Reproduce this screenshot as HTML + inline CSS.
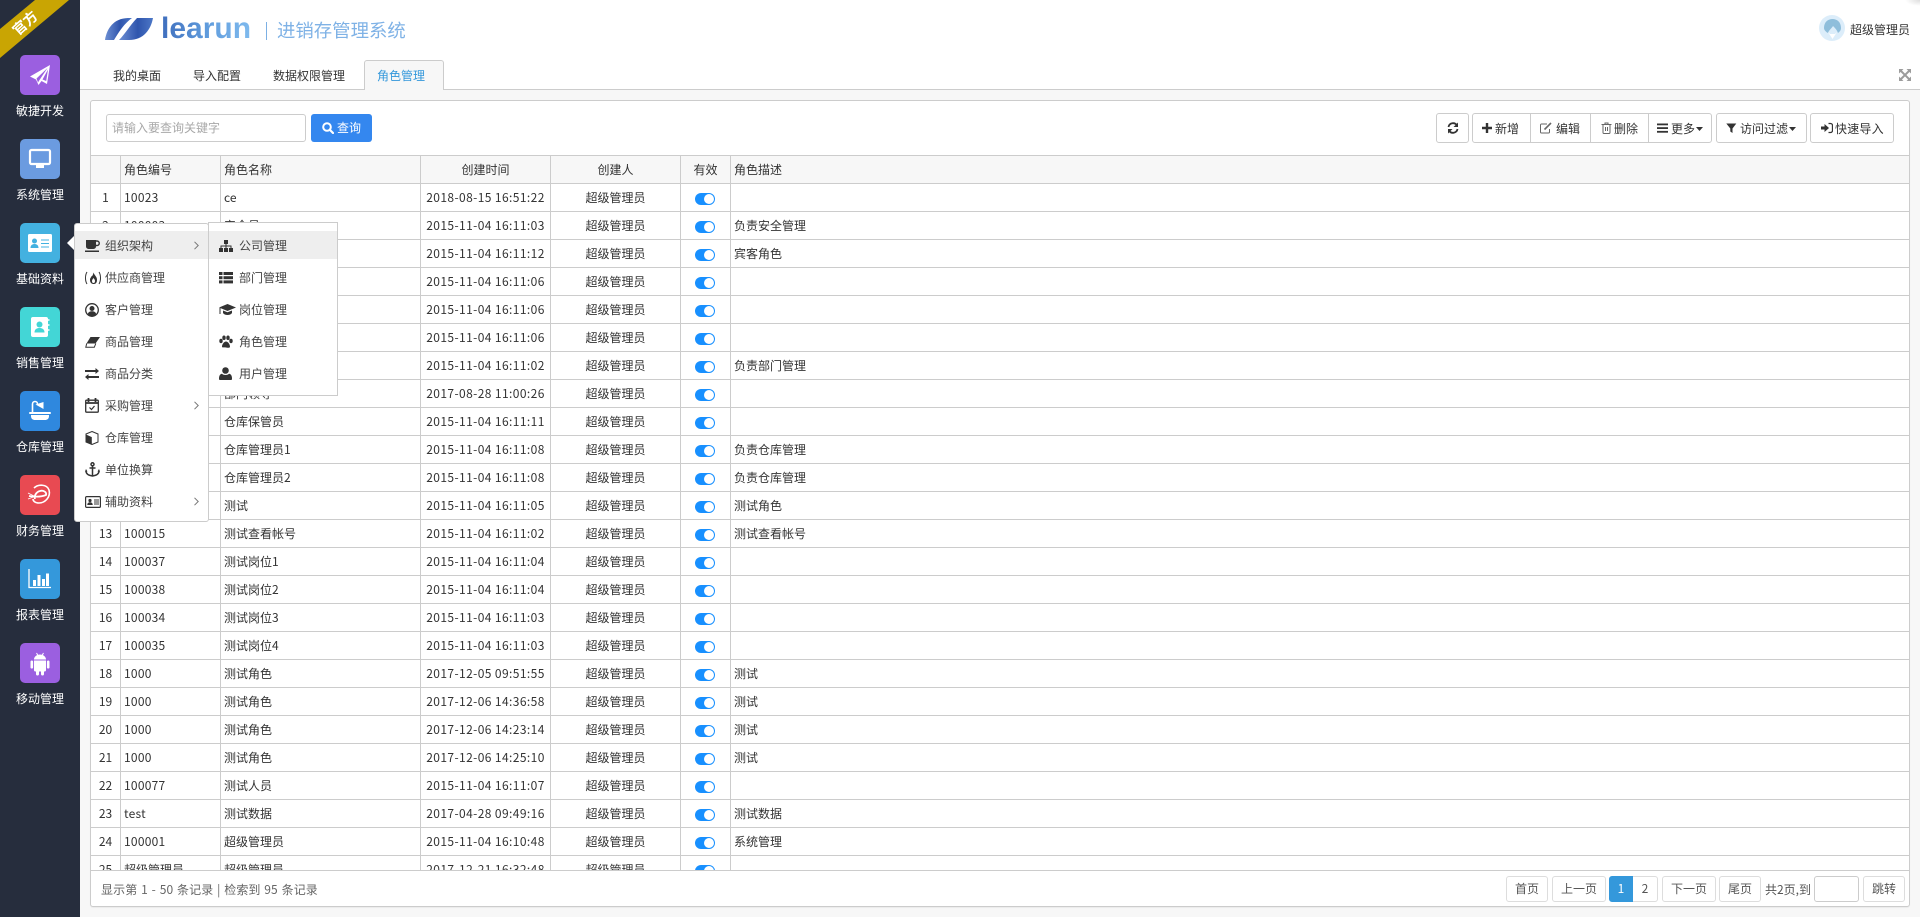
<!DOCTYPE html>
<html lang="zh">
<head>
<meta charset="utf-8">
<title>角色管理</title>
<style>
*{box-sizing:border-box}
html,body{margin:0;padding:0;width:1920px;height:917px;overflow:hidden}
body{background:#f7f7f7;font:12px/16px "Noto Sans CJK SC","Liberation Sans",sans-serif;color:#333;position:relative}
.a{position:absolute;white-space:nowrap}
#side{position:absolute;left:0;top:0;width:80px;height:917px;background:#262d3d}
.sico{position:absolute;left:20px;width:40px;height:40px;border-radius:5px}
.sico svg{display:block;width:40px;height:40px}
.slab{position:absolute;left:0;width:80px;text-align:center;color:#fff;line-height:16px}
#top{position:absolute;left:80px;top:0;width:1840px;height:90px;background:#fff;border-bottom:1px solid #ccc}
.tab{position:absolute;top:67px;line-height:17px;color:#333}
#atab{position:absolute;left:364px;top:60px;width:80px;height:30px;background:#f7f7f7;border:1px solid #ccc;border-bottom:none;border-radius:3px 3px 0 0;color:#3498db;text-align:center;line-height:29px;padding-right:6px}
#panel{position:absolute;left:90px;top:100px;width:1820px;height:807px;background:#fff;border:1px solid #ccc;border-radius:3px;box-shadow:0 1px 1px rgba(0,0,0,.05)}
#wrap{position:absolute;left:91px;top:155px;width:1818px;height:716px;overflow:hidden;border-bottom:1px solid #ccc;border-top:1px solid #ccc}
table{border-collapse:separate;border-spacing:0;table-layout:fixed;width:1818px}
th,td{height:28px;padding:0 4px 0 3px;border-right:1px solid #ccc;border-bottom:1px solid #ccc;font-weight:normal;white-space:nowrap;overflow:hidden;line-height:27px;color:#333;text-align:left}
th{background:#f7f7f7}
th:last-child,td:last-child{border-right:none}
.c{text-align:center;padding:0}
td.n{letter-spacing:.25px}
td.c.n{letter-spacing:.4px}
.sw{display:block;width:20px;height:12px;border-radius:6px;background:#1890ff;margin:3px auto 0;position:relative}
.sw:after{content:"";position:absolute;right:1px;top:1px;width:10px;height:10px;border-radius:5px;background:#fff}
.btn{position:absolute;background:#fff;border:1px solid #ccc;border-radius:3px;color:#333;height:30px;top:113px;line-height:28px;text-align:center}
.btn svg,.mi svg{position:absolute}
.mi svg{margin-top:1px}
.pg{position:absolute;top:876px;height:26px;background:#fff;border:1px solid #ddd;border-radius:3px;text-align:center;line-height:24px;color:#555}
#m1{position:absolute;left:74px;top:223px;width:135px;height:299px;background:#fff;border:1px solid #ccc;border-radius:3px}
#m2{position:absolute;left:208px;top:222px;width:130px;height:174px;background:#fff;border:1px solid #ccc}
.mi{position:absolute;left:0;width:100%;height:28px;line-height:30px;color:#444}
.mi.on{background:#eee}
</style>
</head>
<body>

<div id="top">
  <svg class="a" style="left:25px;top:16px" width="50" height="26" viewBox="0 0 50 26">
    <defs><linearGradient id="lg" x1="0" x2="1" y1="0" y2="0"><stop offset="0" stop-color="#6d8fd3"/><stop offset=".55" stop-color="#2f55ad"/><stop offset="1" stop-color="#4c77c6"/></linearGradient></defs>
    <path fill="url(#lg)" d="M0 24C2 12 9 2 24 2h3C20 7 15 14 9 24z"/>
    <path fill="url(#lg)" d="M14 24C20 18 26 8 32 2h16c-2 11-9 22-24 22z"/>
  </svg>
  <div class="a" style="left:81px;top:11px;font:bold 30px/36px 'Liberation Sans',sans-serif;background:linear-gradient(90deg,#3f6ebd,#5f9bdc 50%,#7fbaee);-webkit-background-clip:text;background-clip:text;color:transparent">learun</div>
  <div class="a" style="left:186px;top:22px;width:1px;height:18px;background:#7cb0e4"></div>
  <div class="a" style="left:197px;top:17px;font-size:18.4px;line-height:27px;color:#7fb2e6">进销存管理系统</div>
  <div class="tab" style="left:33px">我的桌面</div>
  <div class="tab" style="left:113px">导入配置</div>
  <div class="tab" style="left:193px">数据权限管理</div>
  <svg class="a" style="left:1739px;top:15px" width="26" height="26" viewBox="0 0 26 26">
    <circle cx="13" cy="13" r="13" fill="#dcedfa"/>
    <path fill="#8fbedb" d="M5 13C5 7 9 4 13.500 4S22 7 22 13c0 3-2 4-3 5-1-3-3-5-5-7-1 2-4 4-5 7-2-1-4-3-4-5z"/>
    <path fill="#fff" d="M9 17l4.500 7 4.500-7-2 2h-5z"/>
  </svg>
  <div class="a" style="left:1770px;top:22px">超级管理员</div>
  <svg class="a" style="left:1819px;top:69px" width="12" height="12" viewBox="0 0 12 12" fill="#9c9c9c" stroke="#9c9c9c">
    <path stroke="none" d="M0 0h4.500L0 4.500zM12 0v4.500L7.500 0zM0 12V7.500L4.500 12zM12 12H7.500L12 7.500z"/>
    <path stroke-width="2" fill="none" d="M2 2l8 8M10 2l-8 8"/>
  </svg>
</div>
<div id="atab">角色管理</div>
<div class="a" style="left:1905px;top:0;width:15px;height:6px;background:radial-gradient(ellipse at 100% 0,#ddd,#fff 70%)"></div>

<div id="panel"></div>

<div class="a" style="left:106px;top:114px;width:200px;height:28px;border:1px solid #ccc;border-radius:3px;background:#fff;color:#a8a8a8;line-height:26px;padding-left:5px">请输入要查询关键字</div>
<div class="a" style="left:311px;top:114px;width:61px;height:28px;background:#3487ef;border-radius:3px;color:#fff;line-height:27px;padding-left:26px">查询
  <svg class="a" style="left:11px;top:8px" width="12" height="12" viewBox="0 0 12 12"><circle cx="5" cy="5" r="3.800" fill="none" stroke="#fff" stroke-width="2"/><path d="M8 8l3 3" stroke="#fff" stroke-width="2.200" stroke-linecap="round"/></svg>
</div>

<div class="btn" style="left:1436px;width:33px">
  <svg style="left:10px;top:8px" width="12" height="12" viewBox="0 0 12 12" fill="none" stroke="#333" stroke-width="1.800"><path d="M1.500 5A4.600 4.600 0 0 1 10 3.500"/><path d="M10.500 7A4.600 4.600 0 0 1 2 8.500"/><path fill="#333" stroke="none" d="M11 .5V5H6.500zM1 11.500V7h4.500z"/></svg>
</div>
<div class="btn" style="left:1472px;width:240px"></div>
<div class="a" style="left:1530px;top:114px;width:1px;height:28px;background:#ccc"></div>
<div class="a" style="left:1590px;top:114px;width:1px;height:28px;background:#ccc"></div>
<div class="a" style="left:1648px;top:114px;width:1px;height:28px;background:#ccc"></div>
<svg class="a" style="left:1482px;top:122px" width="10" height="12" viewBox="0 0 10 12"><path fill="#333" d="M3.800 1h2.400v3.800H10v2.400H6.200V11H3.800V7.200H0V4.800h3.800z"/></svg>
<div class="a" style="left:1495px;top:121px">新增</div>
<svg class="a" style="left:1540px;top:122px" width="12" height="12" viewBox="0 0 12 12" fill="none" stroke="#666"><path d="M9.500 7v3a1 1 0 0 1-1 1H1.500a1 1 0 0 1-1-1V3a1 1 0 0 1 1-1H7"/><path stroke-width="1.600" d="M4.500 7.500L11 1"/></svg>
<div class="a" style="left:1556px;top:121px">编辑</div>
<svg class="a" style="left:1601px;top:122px" width="11" height="12" viewBox="0 0 11 12" fill="none" stroke="#666"><path d="M.5 2.500h10M2 2.500v8.000a1 1 0 0 0 1 1h5a1 1 0 0 0 1-1v-8M4 2.500V1h3v1.500M4.500 5v4M6.500 5v4"/></svg>
<div class="a" style="left:1614px;top:121px">删除</div>
<svg class="a" style="left:1657px;top:122px" width="11" height="12" viewBox="0 0 11 12" fill="#333"><rect y="1.500" width="11" height="1.800"/><rect y="5.200" width="11" height="1.800"/><rect y="8.900" width="11" height="1.800"/></svg>
<div class="a" style="left:1671px;top:121px">更多</div>
<svg class="a" style="left:1696px;top:127px" width="7" height="4"><path fill="#333" d="M0 0h7L3.500 4z"/></svg>

<div class="btn" style="left:1716px;width:91px"></div>
<svg class="a" style="left:1726px;top:122px" width="11" height="12" viewBox="0 0 11 12"><path fill="#333" d="M.3 1.500h10L6.500 6.500v4.500L4.300 9.500v-3z"/></svg>
<div class="a" style="left:1740px;top:121px">访问过滤</div>
<svg class="a" style="left:1789px;top:127px" width="7" height="4"><path fill="#333" d="M0 0h7L3.500 4z"/></svg>

<div class="btn" style="left:1810px;width:84px"></div>
<svg class="a" style="left:1821px;top:122px" width="12" height="12" viewBox="0 0 12 12"><path fill="#333" d="M0 4.500h3.500V2L8 6 3.500 10V7.500H0z"/><path fill="none" stroke="#333" stroke-width="1.300" d="M7.500 1.500h2a2 2 0 0 1 2 2v5a2 2 0 0 1-2 2h-2"/></svg>
<div class="a" style="left:1835px;top:121px;letter-spacing:.2px">快速导入</div>

<div id="wrap">
<table>
<colgroup><col style="width:30px"><col style="width:100px"><col style="width:200px"><col style="width:130px"><col style="width:130px"><col style="width:50px"><col></colgroup>
<tr><th class="c"></th><th>角色编号</th><th>角色名称</th><th class="c">创建时间</th><th class="c">创建人</th><th class="c">有效</th><th>角色描述</th></tr>
<tr><td class="c">1</td><td class="n">10023</td><td>ce</td><td class="c n">2018-08-15 16:51:22</td><td class="c">超级管理员</td><td><i class="sw"></i></td><td></td></tr>
<tr><td class="c">2</td><td class="n">100003</td><td>安全员</td><td class="c n">2015-11-04 16:11:03</td><td class="c">超级管理员</td><td><i class="sw"></i></td><td>负责安全管理</td></tr>
<tr><td class="c">3</td><td class="n">100004</td><td>宾客</td><td class="c n">2015-11-04 16:11:12</td><td class="c">超级管理员</td><td><i class="sw"></i></td><td>宾客角色</td></tr>
<tr><td class="c">4</td><td class="n">100005</td><td>财务</td><td class="c n">2015-11-04 16:11:06</td><td class="c">超级管理员</td><td><i class="sw"></i></td><td></td></tr>
<tr><td class="c">5</td><td class="n">100006</td><td>采购</td><td class="c n">2015-11-04 16:11:06</td><td class="c">超级管理员</td><td><i class="sw"></i></td><td></td></tr>
<tr><td class="c">6</td><td class="n">100007</td><td>销售</td><td class="c n">2015-11-04 16:11:06</td><td class="c">超级管理员</td><td><i class="sw"></i></td><td></td></tr>
<tr><td class="c">7</td><td class="n">100008</td><td>部门经理</td><td class="c n">2015-11-04 16:11:02</td><td class="c">超级管理员</td><td><i class="sw"></i></td><td>负责部门管理</td></tr>
<tr><td class="c">8</td><td class="n">100009</td><td>部门领导</td><td class="c n">2017-08-28 11:00:26</td><td class="c">超级管理员</td><td><i class="sw"></i></td><td></td></tr>
<tr><td class="c">9</td><td class="n">100010</td><td>仓库保管员</td><td class="c n">2015-11-04 16:11:11</td><td class="c">超级管理员</td><td><i class="sw"></i></td><td></td></tr>
<tr><td class="c">10</td><td class="n">100011</td><td>仓库管理员1</td><td class="c n">2015-11-04 16:11:08</td><td class="c">超级管理员</td><td><i class="sw"></i></td><td>负责仓库管理</td></tr>
<tr><td class="c">11</td><td class="n">100012</td><td>仓库管理员2</td><td class="c n">2015-11-04 16:11:08</td><td class="c">超级管理员</td><td><i class="sw"></i></td><td>负责仓库管理</td></tr>
<tr><td class="c">12</td><td class="n">100014</td><td>测试</td><td class="c n">2015-11-04 16:11:05</td><td class="c">超级管理员</td><td><i class="sw"></i></td><td>测试角色</td></tr>
<tr><td class="c">13</td><td class="n">100015</td><td>测试查看帐号</td><td class="c n">2015-11-04 16:11:02</td><td class="c">超级管理员</td><td><i class="sw"></i></td><td>测试查看帐号</td></tr>
<tr><td class="c">14</td><td class="n">100037</td><td>测试岗位1</td><td class="c n">2015-11-04 16:11:04</td><td class="c">超级管理员</td><td><i class="sw"></i></td><td></td></tr>
<tr><td class="c">15</td><td class="n">100038</td><td>测试岗位2</td><td class="c n">2015-11-04 16:11:04</td><td class="c">超级管理员</td><td><i class="sw"></i></td><td></td></tr>
<tr><td class="c">16</td><td class="n">100034</td><td>测试岗位3</td><td class="c n">2015-11-04 16:11:03</td><td class="c">超级管理员</td><td><i class="sw"></i></td><td></td></tr>
<tr><td class="c">17</td><td class="n">100035</td><td>测试岗位4</td><td class="c n">2015-11-04 16:11:03</td><td class="c">超级管理员</td><td><i class="sw"></i></td><td></td></tr>
<tr><td class="c">18</td><td class="n">1000</td><td>测试角色</td><td class="c n">2017-12-05 09:51:55</td><td class="c">超级管理员</td><td><i class="sw"></i></td><td>测试</td></tr>
<tr><td class="c">19</td><td class="n">1000</td><td>测试角色</td><td class="c n">2017-12-06 14:36:58</td><td class="c">超级管理员</td><td><i class="sw"></i></td><td>测试</td></tr>
<tr><td class="c">20</td><td class="n">1000</td><td>测试角色</td><td class="c n">2017-12-06 14:23:14</td><td class="c">超级管理员</td><td><i class="sw"></i></td><td>测试</td></tr>
<tr><td class="c">21</td><td class="n">1000</td><td>测试角色</td><td class="c n">2017-12-06 14:25:10</td><td class="c">超级管理员</td><td><i class="sw"></i></td><td>测试</td></tr>
<tr><td class="c">22</td><td class="n">100077</td><td>测试人员</td><td class="c n">2015-11-04 16:11:07</td><td class="c">超级管理员</td><td><i class="sw"></i></td><td></td></tr>
<tr><td class="c">23</td><td class="n">test</td><td>测试数据</td><td class="c n">2017-04-28 09:49:16</td><td class="c">超级管理员</td><td><i class="sw"></i></td><td>测试数据</td></tr>
<tr><td class="c">24</td><td class="n">100001</td><td>超级管理员</td><td class="c n">2015-11-04 16:10:48</td><td class="c">超级管理员</td><td><i class="sw"></i></td><td>系统管理</td></tr>
<tr><td class="c">25</td><td>超级管理员</td><td>超级管理员</td><td class="c n">2017-12-21 16:32:48</td><td class="c">超级管理员</td><td><i class="sw"></i></td><td></td></tr>
</table>
</div>

<div class="a" style="left:101px;top:882px;color:#666;word-spacing:1px;letter-spacing:.1px">显示第 1 - 50 条记录 | 检索到 95 条记录</div>
<div class="pg" style="left:1506px;width:42px">首页</div>
<div class="pg" style="left:1552px;width:54px">上一页</div>
<div class="pg" style="left:1609px;width:24px;background:#3498db;border-color:#3498db;color:#fff;border-radius:3px 0 0 3px">1</div>
<div class="pg" style="left:1633px;width:25px;border-radius:0 3px 3px 0;border-left:none">2</div>
<div class="pg" style="left:1662px;width:54px">下一页</div>
<div class="pg" style="left:1719px;width:42px">尾页</div>
<div class="a" style="left:1765px;top:882px;color:#555">共2页,到</div>
<div class="pg" style="left:1814px;width:45px;border-color:#ccc"></div>
<div class="pg" style="left:1863px;width:42px">跳转</div>

<div id="side">
  <svg class="a" style="left:0;top:0" width="80" height="60"><polygon points="0,29 35,0 69,0 0,58" fill="#c9a503"/></svg>
  <div class="a" style="left:10px;top:14px;width:30px;text-align:center;color:#fff;font-size:14px;line-height:18px;font-weight:bold;transform:rotate(-42deg)">官方</div>

  <div class="sico" style="top:55px;background:#9b5fe0"><svg viewBox="0 0 40 40"><path fill="#fff" d="M30 10L10 21.500l6 3 2.500 5.500 3-4 5.500 3z"/><path fill="#9b5fe0" d="M16.500 23.500l11-10.500-8 12-1.500 2.500zM22.500 24.500L28 14.500l-1.800 11.500z"/></svg></div>
  <div class="slab" style="top:103px">敏捷开发</div>

  <div class="sico" style="top:139px;background:#6b9be0"><svg viewBox="0 0 40 40"><rect x="10" y="11" width="20" height="14" rx="1.500" fill="none" stroke="#fff" stroke-width="2.200"/><rect x="16" y="26" width="8" height="3" fill="#fff"/></svg></div>
  <div class="slab" style="top:187px">系统管理</div>

  <div class="sico" style="top:223px;background:#43b1e0"><svg viewBox="0 0 40 40"><rect x="8" y="11" width="24" height="18" rx="1.500" fill="#fff"/><circle cx="14.500" cy="18" r="2.500" fill="#43b1e0"/><path fill="#43b1e0" d="M10.500 25c0-3 2-4 4-4s4 1 4 4z"/><path stroke="#43b1e0" d="M21 17h8M21 20.500h8M21 24h8" fill="none"/></svg></div>
  <div class="slab" style="top:271px">基础资料</div>

  <div class="sico" style="top:307px;background:#43d6d6"><svg viewBox="0 0 40 40"><rect x="11" y="10" width="17" height="20" rx="2" fill="#fff"/><path stroke="#fff" stroke-width="1.500" d="M28 13h1.500M28 18h1.500M28 23h1.500"/><circle cx="19.500" cy="17.500" r="3" fill="#43d6d6"/><path fill="#43d6d6" d="M14.500 25.500c0-3.500 2.500-4.500 5-4.500s5 1 5 4.500z"/></svg></div>
  <div class="slab" style="top:355px">销售管理</div>

  <div class="sico" style="top:391px;background:#2f88de"><svg viewBox="0 0 40 40"><path fill="none" stroke="#fff" stroke-width="1.600" d="M12.500 21v-8a2.500 2.500 0 0 1 5 0"/><path fill="#fff" d="M15.500 13.500l8-2.500v7z"/><rect x="9" y="21" width="22" height="2" rx="1" fill="#fff"/><path fill="#fff" d="M11 24h18v1c0 3-2 4-4 4H15c-2 0-4-1-4-4z"/></svg></div>
  <div class="slab" style="top:439px">仓库管理</div>

  <div class="sico" style="top:475px;background:#e84a52"><svg viewBox="0 0 40 40" fill="none" stroke="#fff"><path stroke-width="1.600" d="M14 13c4-4 13-4 15 2 2 7-4 13-10 13-4 0-6-2-6-4"/><path stroke-width="1.800" d="M9 21c6 1 12 1 17-1 1-3-3-5-6-4-4 1-6 5-5 8"/><path stroke-width=".8" d="M8 18l8 4M8 24l8-3"/></svg></div>
  <div class="slab" style="top:523px">财务管理</div>

  <div class="sico" style="top:559px;background:#3498db"><svg viewBox="0 0 40 40"><path fill="none" stroke="#fff" stroke-width="1.300" d="M9 10v18.500h22"/><path fill="#fff" d="M13 21h3v6h-3zM17.500 16h3v11h-3zM22 20h3v7h-3zM26 14.500h3V27h-3z"/></svg></div>
  <div class="slab" style="top:607px">报表管理</div>

  <div class="sico" style="top:643px;background:#9b5fe0"><svg viewBox="0 0 40 40"><path fill="#fff" d="M14 16.500c0-3 3-5 6-5s6 2 6 5zM14 17.500h12V27a1.500 1.500 0 0 1-1.500 1.500H24V31a1.500 1.500 0 0 1-3 0v-2.500h-2V31a1.500 1.500 0 0 1-3 0v-2.500h-.5A1.500 1.500 0 0 1 14 27z"/><rect x="10.500" y="17.500" width="2.600" height="8" rx="1.300" fill="#fff"/><rect x="26.900" y="17.500" width="2.600" height="8" rx="1.300" fill="#fff"/><path stroke="#fff" d="M16.500 10l1.500 2.500M23.500 10L22 12.500"/></svg></div>
  <div class="slab" style="top:691px">移动管理</div>
</div>

<svg class="a" style="left:67px;top:235px" width="8" height="16"><path fill="#fff" d="M8 0v16L0 8z"/></svg>

<div id="m1">
  <div class="mi on" style="top:7px"><svg style="left:10px;top:7px" width="15" height="14" viewBox="0 0 15 14"><path fill="#333" d="M1 1h10v6.500A2.500 2.500 0 0 1 8.500 10h-5A2.500 2.500 0 0 1 1 7.500z"/><path fill="none" stroke="#333" stroke-width="1.400" d="M11 2h1a2 2 0 0 1 0 4.500h-1"/><rect y="11.500" width="14" height="1.500" fill="#333"/></svg><span class="a" style="left:30px;top:0">组织架构</span><svg style="left:119px;top:9px" width="5" height="9" viewBox="0 0 5 9"><path fill="none" stroke="#777" d="M.5.800L4.200 4.500.5 8.200"/></svg></div>
  <div class="mi" style="top:39px"><svg style="left:9px;top:6px" width="18" height="16" viewBox="0 0 18 16" fill="none" stroke="#333"><path d="M3 2C1 5 1 11 3 14M15 2c2 3 2 9 0 12"/><path fill="#333" stroke="none" d="M9.500 2.500c1 3 3.500 4 3.500 7.500S11 14 9.500 14 6 13 6 10c0-2.500 1.500-2.500 1.500-4 1 .5 1.500-1.500 2-3.500z"/><path fill="#fff" stroke="none" d="M9.500 8c.5 1 1.500 1.500 1.500 3s-.7 2-1.500 2-1.500-.5-1.500-2 1-2 1.500-3z"/></svg><span class="a" style="left:30px;top:0">供应商管理</span></div>
  <div class="mi" style="top:71px"><svg style="left:10px;top:7px" width="14" height="14" viewBox="0 0 14 14"><circle cx="7" cy="7" r="6.300" fill="none" stroke="#333" stroke-width="1.300"/><circle cx="7" cy="5.500" r="2.500" fill="#333"/><path fill="#333" d="M2.800 11c.5-2 2.200-2.800 4.200-2.800s3.700.8 4.200 2.800c-1 1.200-2.500 2-4.200 2s-3.200-.8-4.200-2z"/></svg><span class="a" style="left:30px;top:0">客户管理</span></div>
  <div class="mi" style="top:103px"><svg style="left:10px;top:8px" width="15" height="12" viewBox="0 0 15 12"><path fill="#333" d="M5.500 1h9.500L10.500 7.500h-9z"/><path fill="none" stroke="#333" d="M1.700 7.500L.8 11.300h8.500l1.500-3.800"/></svg><span class="a" style="left:30px;top:0">商品管理</span></div>
  <div class="mi" style="top:135px"><svg style="left:10px;top:8px" width="14" height="12" viewBox="0 0 14 12"><path fill="#333" d="M0 2h10.500V0L14 3l-3.500 3V4H0zM14 8H3.500V6L0 9l3.500 3v-2H14z"/></svg><span class="a" style="left:30px;top:0">商品分类</span></div>
  <div class="mi" style="top:167px"><svg style="left:10px;top:6px" width="14" height="15" viewBox="0 0 14 15" fill="none" stroke="#333"><rect x=".7" y="2.200" width="12.600" height="12" rx="1" stroke-width="1.300"/><path stroke-width="1.800" d="M3.500 0v4M10.500 0v4M.7 5h12.600"/><path stroke-width="1.200" d="M4.500 9.500L6.500 11.500l3-3.500"/></svg><span class="a" style="left:30px;top:0">采购管理</span><svg style="left:119px;top:9px" width="5" height="9" viewBox="0 0 5 9"><path fill="none" stroke="#777" d="M.5.800L4.200 4.500.5 8.200"/></svg></div>
  <div class="mi" style="top:199px"><svg style="left:10px;top:7px" width="14" height="14" viewBox="0 0 14 14"><path fill="#fff" stroke="#333" d="M7 .5l6 2.500v8L7 13.500 1 11V3z"/><path fill="#333" d="M1 3.500l5.800 2.600V13.500L1 11z"/></svg><span class="a" style="left:30px;top:0">仓库管理</span></div>
  <div class="mi" style="top:231px"><svg style="left:10px;top:6px" width="15" height="15" viewBox="0 0 15 15" fill="none" stroke="#333" stroke-width="1.500"><circle cx="7.500" cy="2.300" r="1.500"/><path d="M7.500 4v10M4.500 6h6"/><path d="M1 9c0 3 3 4.500 6.500 5 3.500-.5 6.500-2 6.500-5"/><path fill="#333" stroke="none" d="M0 9.500L1 7l1.500 2.500zM12.500 9.500L14 7l1 2.500z"/></svg><span class="a" style="left:30px;top:0">单位换算</span></div>
  <div class="mi" style="top:263px"><svg style="left:10px;top:8px" width="16" height="12" viewBox="0 0 16 12" fill="none" stroke="#333"><rect x=".6" y=".6" width="14.800" height="10.800" rx="1" stroke-width="1.200"/><circle cx="5" cy="4.500" r="1.600" fill="#333" stroke="none"/><path fill="#333" stroke="none" d="M2.300 9c0-2 1.300-2.700 2.700-2.700S7.700 7 7.700 9z"/><path d="M9 4h5M9 6h5M9 8h5"/></svg><span class="a" style="left:30px;top:0">辅助资料</span><svg style="left:119px;top:9px" width="5" height="9" viewBox="0 0 5 9"><path fill="none" stroke="#777" d="M.5.800L4.200 4.500.5 8.200"/></svg></div>
</div>

<div id="m2">
  <div class="mi on" style="top:8px"><svg style="left:10px;top:7px" width="14" height="14" viewBox="0 0 14 14" fill="#333"><rect x="5" y="1" width="4" height="4"/><rect y="9" width="4" height="4"/><rect x="5" y="9" width="4" height="4"/><rect x="10" y="9" width="4" height="4"/><path fill="none" stroke="#333" d="M7 5v4M2 9V7h10v2"/></svg><span class="a" style="left:30px;top:0">公司管理</span></div>
  <div class="mi" style="top:40px"><svg style="left:10px;top:8px" width="14" height="12" viewBox="0 0 14 12" fill="#333"><rect width="3.500" height="3"/><rect x="4.500" width="9.500" height="3"/><rect y="4.200" width="3.500" height="3"/><rect x="4.500" y="4.200" width="9.500" height="3"/><rect y="8.400" width="3.500" height="3"/><rect x="4.500" y="8.400" width="9.500" height="3"/></svg><span class="a" style="left:30px;top:0">部门管理</span></div>
  <div class="mi" style="top:72px"><svg style="left:10px;top:7px" width="17" height="14" viewBox="0 0 17 14" fill="#333"><path d="M8.500 1L17 4.500 8.500 8 0 4.500z"/><path d="M4 7.500l4.500 1.800L13 7.500V10c-1 1.500-3 2-4.500 2S5 11.500 4 10z"/><path stroke="#333" d="M1 5v6"/></svg><span class="a" style="left:30px;top:0">岗位管理</span></div>
  <div class="mi" style="top:104px"><svg style="left:10px;top:7px" width="14" height="14" viewBox="0 0 14 14" fill="#333"><ellipse cx="2" cy="6" rx="1.700" ry="2.200"/><ellipse cx="5" cy="2.800" rx="1.700" ry="2.300"/><ellipse cx="9" cy="2.800" rx="1.700" ry="2.300"/><ellipse cx="12" cy="6" rx="1.700" ry="2.200"/><path d="M7 6.500c2 0 4 3 4 5 0 1.500-1.500 1.500-4 1s-4 .5-4-1c0-2 2-5 4-5z"/></svg><span class="a" style="left:30px;top:0">角色管理</span></div>
  <div class="mi" style="top:136px"><svg style="left:10px;top:7px" width="13" height="14" viewBox="0 0 13 14" fill="#333"><circle cx="6.500" cy="3.500" r="3.300"/><path d="M1 13c-1 0-1-.8-1-1.500C0 9 1 7 3 6.800c1 1 2.200 1.200 3.500 1.200S9 7.800 10 6.800c2 .2 3 2.200 3 4.700 0 .7 0 1.500-1 1.500z"/></svg><span class="a" style="left:30px;top:0">用户管理</span></div>
</div>

</body>
</html>
